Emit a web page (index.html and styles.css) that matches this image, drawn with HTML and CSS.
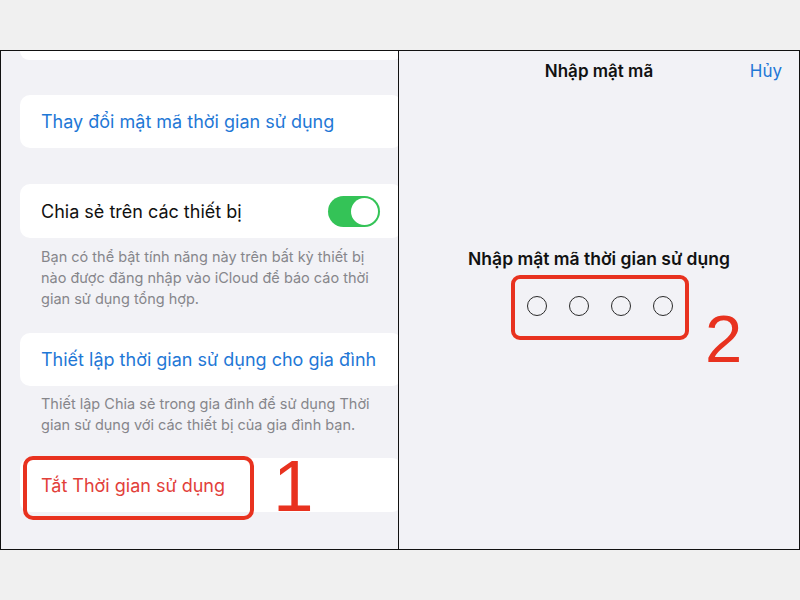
FILE: index.html
```html
<!DOCTYPE html>
<html lang="vi">

<head>
    <meta charset="UTF-8">
    <meta name="viewport" content="width=device-width, initial-scale=1.0">
    <title>Tắt Thời gian sử dụng</title>
    <link rel="stylesheet" href="styles.css">
</head>

<body>
    <div class="frame">
        <!-- left: screen time settings -->
        <section class="settings">
            <div class="card card-stub"></div>

            <div class="card link group-end">Thay đổi mật mã thời gian sử dụng</div>

            <div class="card toggle-row">
                <span>Chia sẻ trên các thiết bị</span>
                <span class="switch"><span class="knob"></span></span>
            </div>
            <p class="footnote">Bạn có thể bật tính năng này trên bất kỳ thiết bị nào được đăng nhập vào iCloud để báo cáo thời gian sử dụng tổng hợp.</p>

            <div class="card link">Thiết lập thời gian sử dụng cho gia đình</div>
            <p class="footnote">Thiết lập Chia sẻ trong gia đình để sử dụng Thời gian sử dụng với các thiết bị của gia đình bạn.</p>

            <div class="card danger">Tắt Thời gian sử dụng</div>

            <div class="mark mark-one"></div>
            <span class="step step-one">1</span>
        </section>

        <!-- right: passcode prompt -->
        <section class="passcode">
            <div class="nav">
                <span class="nav-title">Nhập mật mã</span>
                <span class="nav-cancel">Hủy</span>
            </div>
            <h2 class="prompt">Nhập mật mã thời gian sử dụng</h2>
            <div class="dots">
                <span class="dot"></span>
                <span class="dot"></span>
                <span class="dot"></span>
                <span class="dot"></span>
            </div>
            <span class="step step-two">2</span>
        </section>
    </div>
</body>

</html>
```

FILE: styles.css
```css
/* iOS settings look, two screens side by side */
body {
    margin: 0;
    background: #f0f0f0;
    font-family: Inter, "Noto Sans", sans-serif;
}

.frame {
    box-sizing: border-box;
    width: 800px;
    height: 500px;
    margin-top: 50px;
    border: 1px solid #111;
    display: grid;
    grid-template-columns: 398px 1fr;
    background: #f2f2f6;
}

.settings {
    position: relative;
    overflow: hidden;
    border-right: 1px solid #111;
    padding-left: 19px;
}

.card {
    box-sizing: border-box;
    height: 53px;
    margin-right: -4px;
    padding-left: 21px;
    display: flex;
    align-items: center;
    background: #fff;
    border-radius: 10px;
    font-size: 18px;
    color: #111;
}

.card-stub {
    height: 9px;
    border-radius: 0 0 10px 10px;
    margin-bottom: 35px;
}

.link {
    color: #1f78d6;
}

.group-end {
    margin-bottom: 36px;
}

.toggle-row {
    height: 54px;
    justify-content: space-between;
    padding-right: 22px;
}

.switch {
    width: 52px;
    height: 31px;
    border-radius: 16px;
    background: #34c357;
    display: flex;
    justify-content: flex-end;
    align-items: center;
    padding: 2px;
    box-sizing: border-box;
}

.knob {
    width: 27px;
    height: 27px;
    border-radius: 50%;
    background: #fff;
}

.footnote {
    margin: 0;
    padding: 8px 20px 23px 21px;
    font-size: 14.5px;
    line-height: 21px;
    color: #86868b;
}

.link + .footnote {
    padding-top: 7px;
}

.toggle-row + .footnote {
    padding-bottom: 24px;
}

.danger {
    height: 54px;
    color: #e2403a;
}

/* red annotations */
.mark {
    position: absolute;
    box-sizing: border-box;
    border: 4px solid #e8321f;
    border-radius: 10px;
}

.mark-one {
    left: 22px;
    top: 405px;
    width: 231px;
    height: 64px;
}

.step {
    position: absolute;
    font-family: "Liberation Sans", Arial, sans-serif;
    line-height: 1;
    color: #e8321f;
}

.step-one {
    left: 272px;
    top: 398px;
    font-size: 73px;
}

.passcode {
    position: relative;
    display: flex;
    flex-direction: column;
    align-items: center;
}

.nav {
    align-self: stretch;
    height: 40px;
    display: grid;
    grid-template-columns: 1fr auto 1fr;
    align-items: center;
    font-size: 17px;
}

.nav-title {
    grid-column: 2;
    font-weight: 600;
    color: #111;
}

.nav-cancel {
    justify-self: end;
    padding-right: 17px;
    color: #1f78d6;
}

.prompt {
    margin: 157px 0 5px;
    font-size: 17.5px;
    line-height: 22px;
    font-weight: 600;
    color: #111;
}

.dots {
    box-sizing: border-box;
    width: 178px;
    height: 65px;
    padding-bottom: 3px;
    margin-left: 2px;
    border: 4px solid #e8321f;
    border-radius: 9px;
    display: flex;
    justify-content: center;
    align-items: center;
    gap: 22px;
}

.dot {
    box-sizing: border-box;
    width: 20px;
    height: 20px;
    border: 1.5px solid #2a2a2a;
    border-radius: 50%;
}

.step-two {
    left: 306px;
    top: 254px;
    font-size: 67px;
}
```
